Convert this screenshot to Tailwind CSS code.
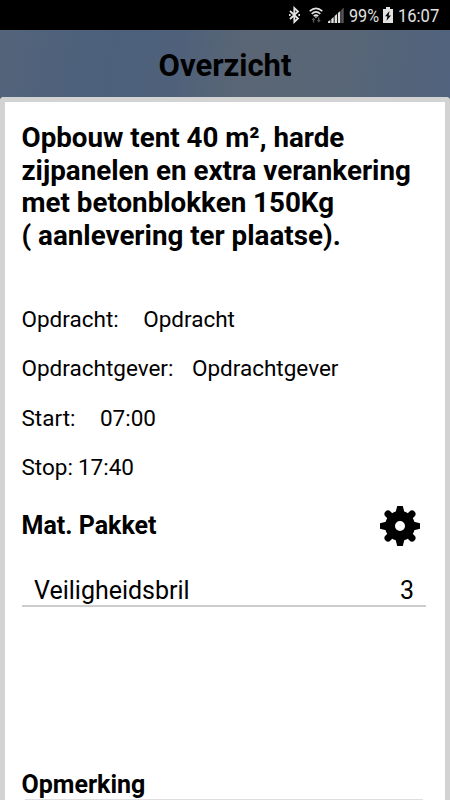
<!DOCTYPE html>
<html lang="nl">
<head>
  <meta charset="UTF-8">
  <meta name="viewport" content="width=device-width, initial-scale=1.0">
  <title>Overzicht</title>
  <script src="https://cdn.jsdelivr.net/npm/@tailwindcss/browser@4"></script>
</head>
<body class="bg-[#50617a] font-[Roboto,sans-serif] text-black">
  <div class="flex flex-col w-[450px] h-[800px] overflow-hidden">

    <!-- Status bar -->
    <div class="flex shrink-0 items-center justify-end h-[30px] pr-[10px] bg-black text-[#e2e2e2]">
      <svg class="w-[11px] h-[18px] mr-[9px]" viewBox="0 0 11 18" fill="none" stroke="currentColor" stroke-width="1.8">
        <path d="M1 5 L9 12.5 L5.3 16 V2 L9 5.5 L1 13"/>
        <path d="M0 9h1.6M9.4 9H11"/>
      </svg>
      <svg class="w-[14px] h-[18px] mr-[5px]" viewBox="0 0 14 18" fill="none" stroke="currentColor" stroke-width="1.6">
        <path d="M0.7 5.2Q7 -0.4 13.3 5.2M2.7 7.8Q7 3.8 11.3 7.8M4.7 10.2Q7 8.2 9.3 10.2"/>
        <path d="M5.5 10.5h3L7 12.3z" fill="currentColor" stroke="none"/>
        <path d="M2.5 14L4.5 11.5L6.5 14zM3.8 14h1.5v2.5h-1.5zM7.8 14L9.8 16.7L11.8 14zM9 11.5h1.5V14H9z" fill="#555" stroke="none"/>
      </svg>
      <svg class="w-[16px] h-[16px] mr-[5px]" viewBox="0 0 16 16" fill="currentColor">
        <path d="M0 16v-1.5L2.4 13v3zM3.3 16v-4L5.7 10v6zM6.6 16V9L9 7v9zM9.9 16V6L12.3 4v12z"/>
        <path d="M13.2 16V3L15.7 0.5V16z" fill="#555"/>
      </svg>
      <span class="w-[31px] mr-[3px] pt-px text-[18px] leading-[30px] whitespace-nowrap"><span class="inline-block origin-left scale-x-[0.9]">99%</span></span>
      <svg class="w-[10px] h-[16px] mr-[5px]" viewBox="0 0 10 16">
        <path d="M3 0h4v2h3v14H0V2h3z" fill="currentColor"/>
        <path d="M6.5 4L2 9.3h2.4L3.5 13.8L8 8.4H5.6z" fill="#000"/>
      </svg>
      <span class="w-[42px] pt-px text-[18px] leading-[30px] whitespace-nowrap"><span class="inline-block origin-left scale-x-[0.92]">16:07</span></span>
    </div>

    <!-- Header -->
    <header class="shrink-0 h-[67px] bg-linear-[100deg,#53647a_0%,#4c607c_25%,#4f617a_40%,#5a6674_55%,#586677_75%,#50627d_100%]">
      <h1 class="text-center text-[31px] leading-[71px] font-bold">Overzicht</h1>
    </header>

    <!-- Order details -->
    <main class="flex flex-col grow min-h-0 rounded-t-[4px] border-[5px] border-b-0 border-[#d3d3d3] bg-white pl-[16.5px] pr-[19px]">
      <h2 class="shrink-0 mt-[20px] h-[131px] text-[27.75px] leading-[32.7px] font-bold whitespace-nowrap">
        Opbouw tent 40 m², harde<br>
        zijpanelen en extra verankering<br>
        met betonblokken 150Kg<br>
        ( aanlevering ter plaatse).
      </h2>

      <div class="shrink-0 mt-[42px] text-[22.5px] leading-[49.4px]">
        <div class="flex gap-[24.5px]"><span>Opdracht:</span><span>Opdracht</span></div>
        <div class="flex gap-[18.5px]"><span>Opdrachtgever:</span><span>Opdrachtgever</span></div>
        <div class="flex gap-[24.5px]"><span>Start:</span><span>07:00</span></div>
        <div class="flex gap-[5px]"><span>Stop:</span><span>17:40</span></div>
      </div>

      <div class="flex shrink-0 items-center justify-between h-[66px] pr-[6px]">
        <h3 class="text-[25px] font-bold">Mat. Pakket</h3>
        <svg class="w-[40px] h-[40px]" viewBox="-20 -20 40 40">
          <circle r="10" fill="none" stroke="#000" stroke-width="10"/>
          <path d="M-2.8 -20H2.8L4.6 -13H-4.6zM-2.8 20H2.8L4.6 13H-4.6zM-20 -2.8V2.8L-13 4.6V-4.6zM20 -2.8V2.8L13 4.6V-4.6z"/>
          <path d="M-12 -12L-7 -7M12 -12L7 -7M-12 12L-7 7M12 12L7 7" stroke="#000" stroke-width="7" stroke-linecap="round"/>
        </svg>
      </div>

      <div class="flex shrink-0 items-end justify-between h-[48px] pl-[12.5px] pr-[12px] border-b-2 border-[#cdcdcd] text-[25px] leading-[28px]">
        <span>Veiligheidsbril</span>
        <span>3</span>
      </div>

      <h3 class="shrink-0 mt-[163px] h-[29px] text-[25px] leading-[30px] font-bold">Opmerking</h3>
      <div class="shrink-0 h-px ml-[3px] mr-[3px] bg-[#dedede]"></div>
    </main>
  </div>
</body>
</html>
